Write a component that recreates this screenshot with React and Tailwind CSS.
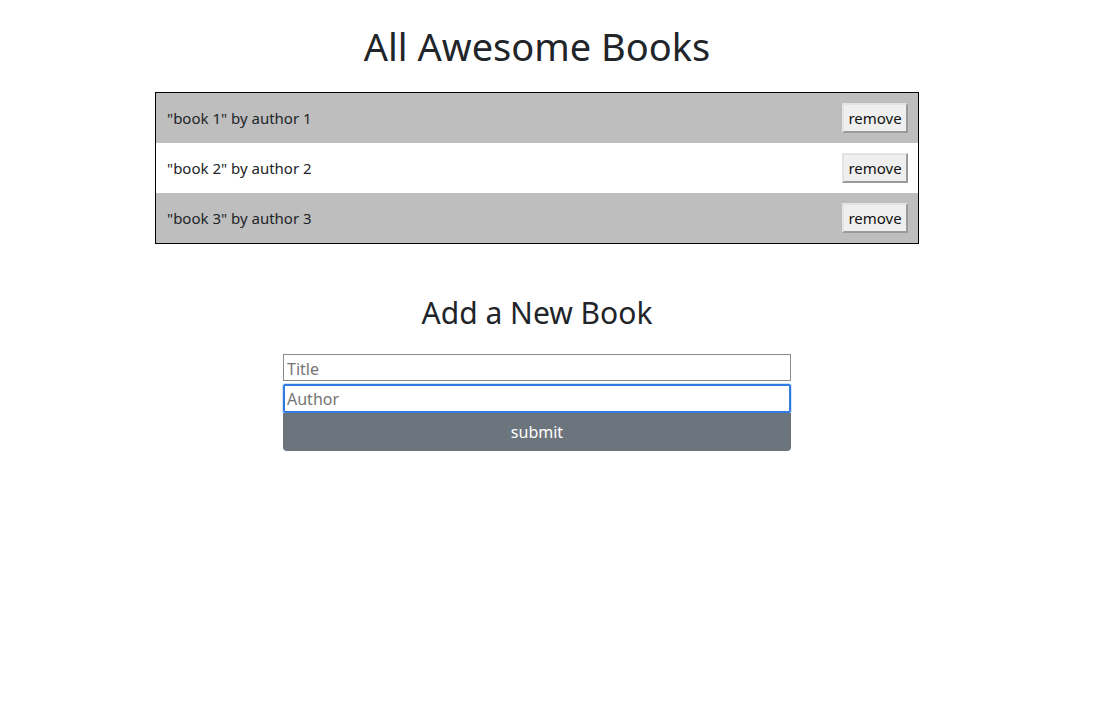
import React from "react";

const books = [
  { title: "book 1", author: "author 1" },
  { title: "book 2", author: "author 2" },
  { title: "book 3", author: "author 3" },
];

export default function App() {
  return (
    <div className="min-h-screen bg-white text-[#212529] font-['Noto_Sans',sans-serif]">
      <div className="w-[1074px] flex flex-col items-center pt-[22px]">
        <h1 className="text-[38px] leading-[48px] font-normal text-center">All Awesome Books</h1>
        <div className="mt-[22px] w-[764px] border border-black">
          {books.map((b, i) => (
            <div
              key={i}
              className={`flex items-center justify-between h-[50px] pl-[11px] pr-[10px] ${i % 2 === 0 ? "bg-[#bebebe]" : "bg-white"}`}
            >
              <span className="text-[15px]">"{b.title}" by {b.author}</span>
              <button className="h-[30px] w-[66px] bg-[#efefef] border-2 border-t-[#e3e3e3] border-l-[#e3e3e3] border-b-[#9a9a9a] border-r-[#9a9a9a] text-[15px] text-[#111] flex items-center justify-center">
                remove
              </button>
            </div>
          ))}
        </div>
        <h2 className="mt-[50px] text-[30px] leading-[38px] font-normal text-center">Add a New Book</h2>
        <form className="mt-[22px] w-[508px] flex flex-col">
          <input
            placeholder="Title"
            className="h-[27px] border border-[#8a8a8a] px-[3px] pt-[2px] text-[16px] placeholder:text-[#757575] outline-none"
          />
          <input
            autoFocus
            placeholder="Author"
            className="mt-[3px] h-[29px] border-2 border-[#2f7be0] rounded-[2px] px-[2px] pt-[1px] text-[16px] caret-black placeholder:text-[#757575] outline-none shadow-[0_0_0_1px_#cfe3fb]"
          />
          <button
            type="button"
            className="h-[38px] bg-[#6c757d] text-white text-[16px] rounded-[4px] rounded-t-none"
          >
            submit
          </button>
        </form>
      </div>
    </div>
  );
}
